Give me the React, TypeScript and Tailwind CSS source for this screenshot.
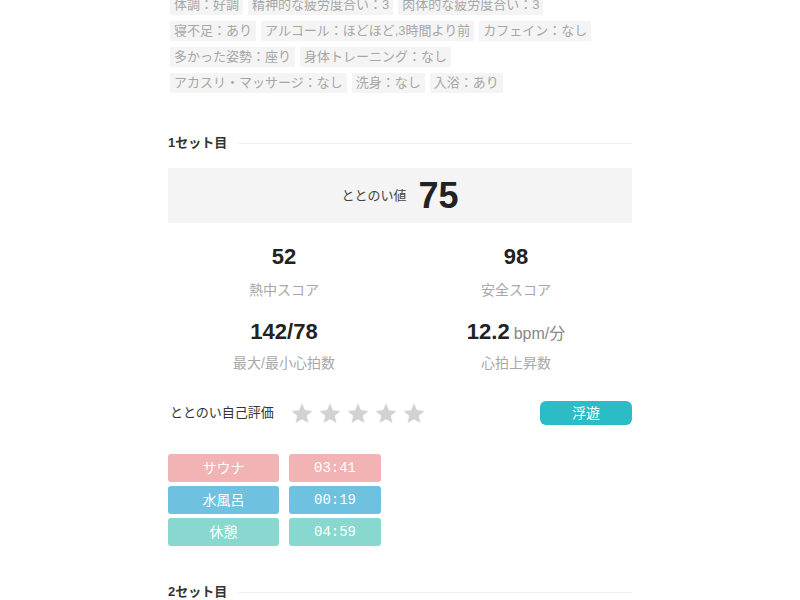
const tagRows = [
  ["体調：好調", "精神的な疲労度合い：3", "肉体的な疲労度合い：3"],
  ["寝不足：あり", "アルコール：ほどほど,3時間より前", "カフェイン：なし"],
  ["多かった姿勢：座り", "身体トレーニング：なし"],
  ["アカスリ・マッサージ：なし", "洗身：なし", "入浴：あり"],
];

const timers = [
  { label: "サウナ", time: "03:41", color: "bg-[#f2b3b5]" },
  { label: "水風呂", time: "00:19", color: "bg-[#6fc1e0]" },
  { label: "休憩", time: "04:59", color: "bg-[#89d8cf]" },
];

const jp = "font-['Liberation_Sans','Noto_Sans_CJK_JP',sans-serif]";

const Star = () => (
  <svg width="24" height="23" viewBox="0 0 24 24" className="fill-[#d2d2d2]">
    <path d="M12 1.5l3.1 7.1 7.7.7-5.8 5.1 1.7 7.6L12 18l-6.7 4 1.7-7.6-5.8-5.1 7.7-.7z" />
  </svg>
);

const SetHeading = ({ title }: { title: string }) => (
  <div className="flex items-center gap-3 h-5">
    <span className="text-[13px] font-bold text-[#333] whitespace-nowrap">{title}</span>
    <div className="flex-1 h-px bg-[#f0f0f0]" />
  </div>
);

const Stat = ({ value, unit }: { value: string; unit?: string }) => (
  <div className="h-7 flex items-baseline gap-1 text-[22px] leading-7 font-semibold text-[#222]">
    {value}
    {unit && <span className="text-[16px] font-normal text-[#888]">{unit}</span>}
  </div>
);

const Label = ({ text, mt }: { text: string; mt: string }) => (
  <div className={`${mt} h-5 leading-5 text-[14px] text-[#a8a8a8]`}>{text}</div>
);

export default function App() {
  return (
    <div className={`w-[800px] h-[600px] overflow-hidden bg-white ${jp}`}>
      <div className="w-[464px] ml-[168px]">
        {/* conditions, scrolled so the first row is partly hidden */}
        <div className="-mt-[5px] flex flex-col gap-[6px] pl-[2px]">
          {tagRows.map((row, i) => (
            <div key={i} className="flex gap-[5px]">
              {row.map((t) => (
                <span key={t} className="h-5 leading-5 px-1 bg-[#f4f4f4] text-[13px] text-[#a6a6a6] whitespace-nowrap">
                  {t}
                </span>
              ))}
            </div>
          ))}
        </div>

        <div className="mt-[40px]">
          <SetHeading title="1セット目" />
        </div>

        <div className="mt-[15px] h-[55px] bg-[#f4f4f4] flex items-center justify-center gap-3">
          <span className="text-[13px] text-[#444]">ととのい値</span>
          <span className="text-[36px] font-semibold text-[#222] leading-none">75</span>
        </div>

        <div className="grid grid-cols-2">
          <div className="flex flex-col items-center">
            <div className="mt-[20px]"><Stat value="52" /></div>
            <Label mt="mt-[9px]" text="熱中スコア" />
            <div className="mt-[18px]"><Stat value="142/78" /></div>
            <Label mt="mt-[7px]" text="最大/最小心拍数" />
          </div>
          <div className="flex flex-col items-center">
            <div className="mt-[20px]"><Stat value="98" /></div>
            <Label mt="mt-[9px]" text="安全スコア" />
            <div className="mt-[18px]"><Stat value="12.2" unit="bpm/分" /></div>
            <Label mt="mt-[7px]" text="心拍上昇数" />
          </div>
        </div>

        <div className="mt-[28px] h-6 flex items-center">
          <span className="ml-[2px] text-[13px] text-[#333] w-[120px]">ととのい自己評価</span>
          <div className="flex gap-[4px]">
            {[0, 1, 2, 3, 4].map((i) => (
              <Star key={i} />
            ))}
          </div>
          <div className="ml-auto w-[92px] h-6 rounded-md bg-[#2cbcc6] text-white text-[14px] flex items-center justify-center">
            浮遊
          </div>
        </div>

        <div className="mt-[29px] flex flex-col gap-1">
          {timers.map((t) => (
            <div key={t.label} className="flex gap-[10px]">
              <div className={`w-[111px] h-7 rounded-[3px] ${t.color} text-white text-[14px] flex items-center justify-center`}>
                {t.label}
              </div>
              <div className={`w-[92px] h-7 rounded-[3px] ${t.color} text-white text-[14px] font-['Liberation_Mono',monospace] flex items-center justify-center`}>
                {t.time}
              </div>
            </div>
          ))}
        </div>

        <div className="mt-[36px]">
          <SetHeading title="2セット目" />
        </div>
      </div>
    </div>
  );
}
